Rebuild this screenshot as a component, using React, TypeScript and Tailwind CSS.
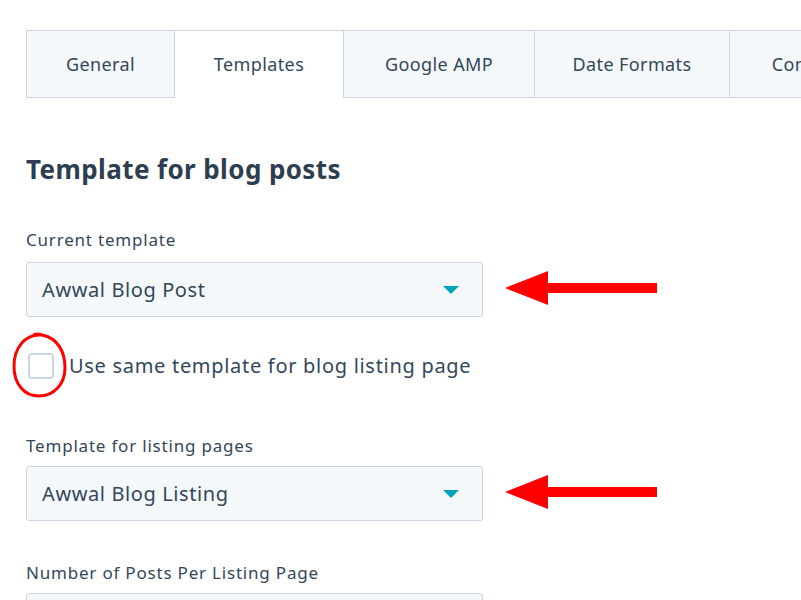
import React from "react"

const tabs = ["General", "Templates", "Google AMP", "Date Formats", "Comments"]
const tabWidths = ["w-[149px]", "w-[169px]", "w-[191px]", "w-[195px]", "w-[180px]"]

// red annotation arrow pointing left
function Arrow() {
  return (
    <svg width="154" height="36" viewBox="0 0 154 36" className="-mt-[4px] ml-[22px] shrink-0">
      <polygon points="0,18 43,1 43,35" fill="#ff0000" />
      <rect x="42" y="13" width="110" height="10" fill="#ff0000" />
    </svg>
  )
}

function Select({ value }: { value: string }) {
  return (
    <div className="flex h-[55px] w-[457px] shrink-0 items-center justify-between rounded-[3px] border border-[#cbd6e2] bg-[#f5f8fa] pl-[15px] pr-[23px]">
      <span className="text-[20px] tracking-[0.6px] text-[#33475b]">{value}</span>
      <svg width="16" height="8" viewBox="0 0 16 8">
        <polygon points="0,0 16,0 8,8" fill="#00a4bd" />
      </svg>
    </div>
  )
}

export default function App() {
  return (
    <div className="h-[600px] w-[801px] overflow-hidden bg-white pl-[26px] pt-[30px] font-['Noto_Sans',sans-serif] text-[#33475b]">
      {/* Tab bar */}
      <div className="flex w-[1000px] border-b border-[#cbd6e2]">
        {tabs.map((t, i) => (
          <div
            key={t}
            className={
              "flex h-[67px] shrink-0 items-center justify-center border-t border-[#cbd6e2] text-[18px] tracking-[0.4px] " +
              tabWidths[i] +
              (i === 0 ? " border-l" : "") +
              (i === 1 ? " -mb-px h-[68px] border-r bg-white" : " border-r bg-[#f5f8fa]")
            }
          >
            {t}
          </div>
        ))}
      </div>

      <h2 className="mt-[55px] text-[26px] font-bold leading-[32px] tracking-[0.4px] text-[#2d3e50]">
        Template for blog posts
      </h2>

      <div className="mt-[43px] text-[17px] leading-[24px] tracking-[0.8px]">Current template</div>
      <div className="mt-[10px] flex items-center">
        <Select value="Awwal Blog Post" />
        <Arrow />
      </div>

      {/* Checkbox row with red circle annotation */}
      <div className="relative mt-[34px] flex items-center">
        <div className="ml-[2px] h-[26px] w-[26px] rounded-[4px] border-2 border-[#cbd6e2] bg-white" />
        <span className="ml-[15px] text-[20px] tracking-[0.7px]">Use same template for blog listing page</span>
        <svg
          width="60"
          height="68"
          viewBox="0 0 60 68"
          className="absolute left-[-15px] top-[-20px]"
        >
          <path
            d="M30 4 C14 3 3 17 3 35 C3 53 13 65 28 65 C43 65 54 53 54 37 C54 21 47 7 31 4 C27 3 24 2 22 5"
            fill="none"
            stroke="#ff0000"
            strokeWidth="3"
            strokeLinecap="round"
          />
        </svg>
      </div>

      <div className="mt-[53px] text-[17px] leading-[24px] tracking-[0.8px]">Template for listing pages</div>
      <div className="mt-[8px] flex items-center">
        <Select value="Awwal Blog Listing" />
        <Arrow />
      </div>

      <div className="mt-[40px] text-[17px] leading-[24px] tracking-[0.8px]">Number of Posts Per Listing Page</div>
      <div className="mt-[8px] h-[55px] w-[457px] rounded-[3px] border border-[#cbd6e2] bg-[#f5f8fa]" />
    </div>
  )
}
